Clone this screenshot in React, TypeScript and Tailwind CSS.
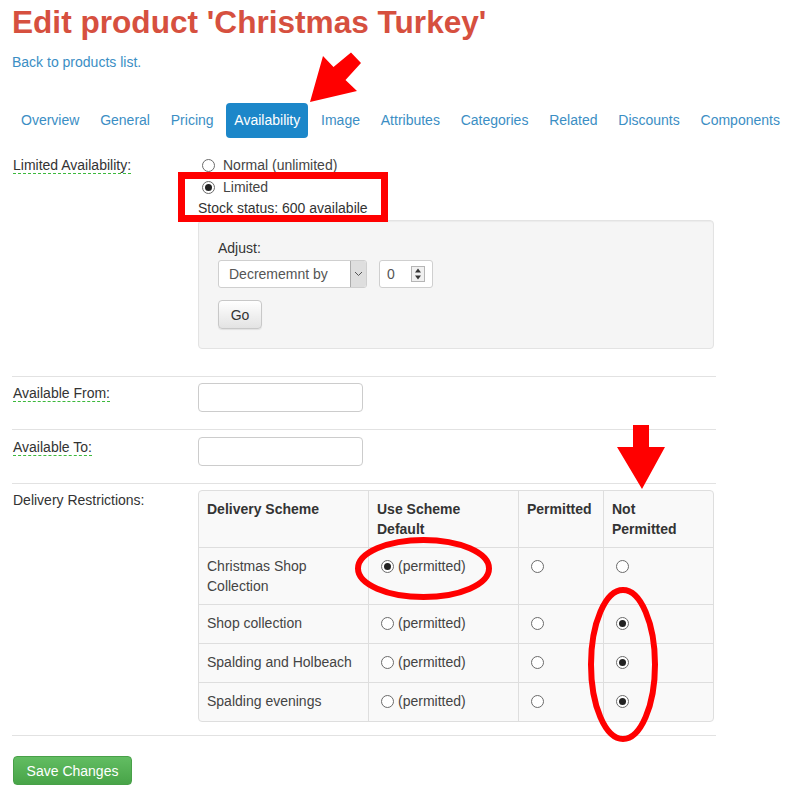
import React from "react";

const tabs = [
  "Overview",
  "General",
  "Pricing",
  "Availability",
  "Image",
  "Attributes",
  "Categories",
  "Related",
  "Discounts",
  "Components",
];

const schemes = [
  { name: ["Christmas Shop", "Collection"], pick: 0 },
  { name: ["Shop collection"], pick: 2 },
  { name: ["Spalding and Holbeach"], pick: 2 },
  { name: ["Spalding evenings"], pick: 2 },
];

function Radio({ checked = false, className = "" }: { checked?: boolean; className?: string }) {
  return (
    <span
      className={`inline-flex items-center justify-center w-[13px] h-[13px] rounded-full border border-[#6b6b6b] bg-white shrink-0 ${className}`}
    >
      {checked && <span className="w-[7px] h-[7px] rounded-full bg-[#222]" />}
    </span>
  );
}

function FieldLabel({ children, dashed = true }: { children: React.ReactNode; dashed?: boolean }) {
  return (
    <div className="w-[186px] pl-px shrink-0">
      <span
        className={`inline-block mt-[2px] leading-[16px] ${dashed ? "border-b border-dashed border-[#3cb93c]" : ""}`}
      >
        {children}
      </span>
    </div>
  );
}

function Rule() {
  return <div className="w-[704px] border-t border-[#e2e2e2]" />;
}

export default function App() {
  return (
    <div className="relative w-[795px] h-[798px] overflow-hidden bg-white font-['Liberation_Sans',Arial,sans-serif] text-[14px] leading-[20px] text-[#333]">
      <div className="pl-3 pt-[5px]">
        <h1 className="text-[31.6px] leading-[34px] font-bold text-[#d6503f]">
          Edit product 'Christmas Turkey'
        </h1>
        <a className="block mt-[13px] text-[#3b8ec4] w-fit">Back to products list.</a>

        {/* Tabs */}
        <nav className="mt-[31px] ml-px flex gap-[4.8px]">
          {tabs.map((t) =>
            t === "Availability" ? (
              <span key={t} className="px-2 py-2 leading-[19px] rounded-[4px] bg-[#1c87c9] text-white">
                {t}
              </span>
            ) : (
              <span key={t} className="px-2 py-2 leading-[19px] text-[#3b8ec4]">
                {t}
              </span>
            )
          )}
        </nav>

        {/* Limited availability */}
        <div className="mt-[17px] flex">
          <FieldLabel>Limited Availability:</FieldLabel>
          <div>
            <div className="h-5 flex items-center">
              <Radio className="ml-[4px]" />
              <span className="ml-[8px] text-[#444]">Normal (unlimited)</span>
            </div>
            <div className="mt-px h-[22px] flex items-center">
              <Radio checked className="ml-[4px]" />
              <span className="ml-[8px] text-[#444]">Limited</span>
            </div>
            <div className="h-5">Stock status: 600 availabile</div>
            <div className="mt-[2px] w-[516px] h-[129px] bg-[#f5f5f5] border border-[#e3e3e3] rounded-[4px] px-[19px] pt-[17px] shadow-[inset_0_1px_1px_rgba(0,0,0,0.04)]">
              <div>Adjust:</div>
              <div className="mt-[2px] flex items-center">
                <div className="w-[149px] h-[28px] flex bg-white border border-[#cfcfcf] rounded-[3px] overflow-hidden">
                  <span className="flex-1 pl-[10px] leading-[26px] text-[#555]">Decrememnt by</span>
                  <span className="w-[16px] h-full flex items-center justify-center bg-[#dedede] border-l border-[#acacac]">
                    <svg width="9" height="6" viewBox="0 0 9 6">
                      <polyline points="1,1 4.5,4.5 8,1" fill="none" stroke="#555" strokeWidth="1" />
                    </svg>
                  </span>
                </div>
                <div className="ml-[12px] w-[54px] h-[28px] flex items-center bg-white border border-[#cfcfcf] rounded-[3px]">
                  <span className="pl-[7px] text-[#555]">0</span>
                  <span className="ml-[16px] w-[14px] h-[16px] flex flex-col border border-[#b5b5b5] bg-[#f0f0f0]">
                    <svg width="12" height="7" viewBox="0 0 12 7">
                      <polygon points="3,5.5 9,5.5 6,1.5" fill="#333" />
                    </svg>
                    <svg width="12" height="7" viewBox="0 0 12 7">
                      <polygon points="3,1.5 9,1.5 6,5.5" fill="#333" />
                    </svg>
                  </span>
                </div>
              </div>
              <button className="mt-[12px] w-[44px] h-[29px] rounded-[4px] border border-[#c8c8c8] bg-gradient-to-b from-white to-[#e3e3e3] text-[#333] shadow-[0_1px_1px_rgba(0,0,0,0.08)]">
                Go
              </button>
            </div>
          </div>
        </div>

        <div className="mt-[27px]">
          <Rule />
        </div>

        {/* Available from */}
        <div className="mt-[6px] flex">
          <FieldLabel>Available From:</FieldLabel>
          <div className="w-[165px] h-[29px] bg-white border border-[#ccc] rounded-[4px]" />
        </div>
        <div className="mt-[17px]">
          <Rule />
        </div>

        {/* Available to */}
        <div className="mt-[7px] flex">
          <FieldLabel>Available To:</FieldLabel>
          <div className="w-[165px] h-[29px] bg-white border border-[#ccc] rounded-[4px]" />
        </div>
        <div className="mt-[17px]">
          <Rule />
        </div>

        {/* Delivery restrictions */}
        <div className="mt-[6px] flex">
          <FieldLabel dashed={false}>Delivery Restrictions:</FieldLabel>
          <div className="w-[516px] border border-[#dedede] rounded-[4px] overflow-hidden bg-[#f9f9f9]">
            <div className="flex h-[56px] font-bold">
              <div className="w-[169px] px-2 pt-2">Delivery Scheme</div>
              <div className="w-[150px] px-2 pt-2 border-l border-[#dedede]">
                Use Scheme
                <br />
                Default
              </div>
              <div className="w-[85px] px-2 pt-2 border-l border-[#dedede]">Permitted</div>
              <div className="w-[110px] px-2 pt-2 border-l border-[#dedede]">
                Not
                <br />
                Permitted
              </div>
            </div>
            {schemes.map((s, i) => (
              <div
                key={i}
                className={`flex border-t border-[#dedede] ${s.name.length > 1 ? "h-[57px]" : "h-[39px]"}`}
              >
                <div className="w-[169px] px-2 pt-2 text-[#444]">
                  {s.name.map((n, j) => (
                    <div key={j}>{n}</div>
                  ))}
                </div>
                <div className="w-[150px] px-2 pt-2 border-l border-[#dedede]">
                  <div className="h-5 flex items-center">
                    <Radio checked={s.pick === 0} className="ml-[3.5px]" />
                    <span className="ml-[4.5px] text-[#444]">(permitted)</span>
                  </div>
                </div>
                <div className="w-[85px] px-2 pt-2 border-l border-[#dedede]">
                  <div className="h-5 flex items-center">
                    <Radio checked={s.pick === 1} className="ml-[3.5px]" />
                  </div>
                </div>
                <div className="w-[110px] px-2 pt-2 border-l border-[#dedede]">
                  <div className="h-5 flex items-center">
                    <Radio checked={s.pick === 2} className="ml-[3.5px]" />
                  </div>
                </div>
              </div>
            ))}
          </div>
        </div>

        <div className="mt-[13px]">
          <Rule />
        </div>

        <button className="mt-[20px] ml-px w-[119px] h-[29px] rounded-[4px] border border-[#48a048] bg-gradient-to-b from-[#62bd62] to-[#48a448] text-white">
          Save Changes
        </button>
      </div>

      {/* red annotations drawn over the screenshot */}
      <svg
        className="absolute left-0 top-0 pointer-events-none"
        width="795"
        height="798"
        viewBox="0 0 795 798"
      >
        <polygon
          points="310,102 323,56 333.5,67 351,52.5 361,63 345.5,80 357,91"
          fill="#ff0000"
        />
        <polygon points="633,425 649,425 649,447 665,447 642,489 617,447 633,447" fill="#ff0000" />
        <rect x="181.5" y="175.5" width="203" height="43" fill="none" stroke="#ff0000" strokeWidth="7" />
        <ellipse cx="423.5" cy="568.5" rx="65.5" ry="28.5" fill="none" stroke="#ff0000" strokeWidth="6" />
        <ellipse cx="623" cy="664.5" rx="32" ry="74.5" fill="none" stroke="#ff0000" strokeWidth="6" />
      </svg>
    </div>
  );
}
